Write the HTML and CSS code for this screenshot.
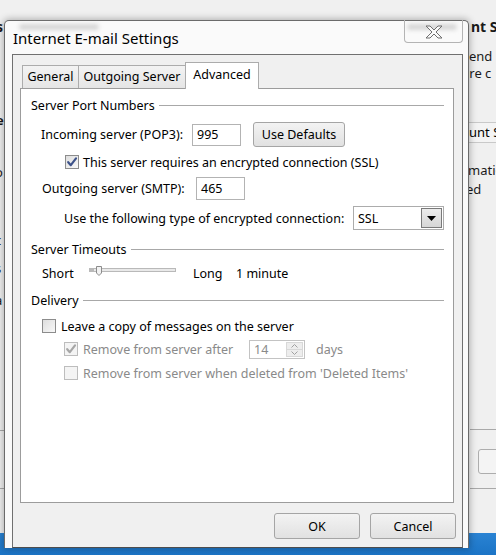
FILE: index.html
```html
<!DOCTYPE html>
<html>
<head>
<meta charset="utf-8">
<title>Internet E-mail Settings</title>
<link rel="stylesheet" href="styles.css">
</head>
<body>
<div class="desktop">
  <div class="bgwin">
    <span class="frag frag-title-r">nt Se</span>
    <span class="frag frag-end">end</span>
    <span class="frag frag-are">are c</span>
    <span class="frag-tab"><span>unt S</span></span>
    <span class="frag frag-mat">matio</span>
    <span class="frag frag-ed">ed</span>
    <span class="frag-line frag-line-1"></span>
    <span class="frag-btn"></span>
    <span class="frag-line frag-line-2"></span>
    <span class="frag frag-title-l">s</span>
    <span class="frag frag-l1">e</span>
    <span class="frag frag-l2">o</span>
    <span class="frag frag-l3">c</span>
    <span class="frag frag-l4">s</span>
    <span class="frag frag-l5">a</span>
    <span class="frag-line frag-line-l1"></span>
    <span class="frag-line frag-line-l2"></span>
  </div>
  <div class="taskbar"></div>

  <div class="dialog">
    <div class="titlebar">
      <span class="glass glass-l"></span>
      <span class="glass glass-r"></span>
      <span class="title">Internet E-mail Settings</span>
      <span class="close">
        <svg width="18" height="14" viewBox="0 0 18 14"><polygon points="1,1 5,1 9,5 13,1 17,1 11,7 17,13 13,13 9,9 5,13 1,13 7,7" fill="#fbfbfb" stroke="#6e6e6e" stroke-width="1" stroke-linejoin="round"/></svg>
      </span>
    </div>

    <div class="client">
      <div class="tabs">
        <div class="tab tab-general">General</div>
        <div class="tab tab-outgoing">Outgoing Server</div>
        <div class="tab tab-advanced active">Advanced</div>
      </div>

      <div class="panel">
        <div class="group-head gh-ports"><span>Server Port Numbers</span><i class="rule"></i></div>

        <div class="row r-in">
          <span class="lbl lbl-in">Incoming server (POP3):</span>
          <span class="field f-port">995</span>
          <span class="btn btn-def">Use Defaults</span>
        </div>

        <div class="row r-ssl">
          <span class="cb"><svg width="12" height="12" viewBox="0 0 12 12"><path d="M2.2 6.2 L4.8 9.2 L10 2.4" fill="none" stroke="#3d5289" stroke-width="2.2" stroke-linecap="round" stroke-linejoin="round"/></svg></span>
          <span class="cb-text">This server requires an encrypted connection (SSL)</span>
        </div>

        <div class="row r-out">
          <span class="lbl lbl-out">Outgoing server (SMTP):</span>
          <span class="field f-port f-out">465</span>
        </div>

        <div class="row r-enc">
          <span class="lbl lbl-enc">Use the following type of encrypted connection:</span>
          <span class="select">
            <span class="select-val">SSL</span>
            <span class="select-btn"><svg width="9" height="5" viewBox="0 0 9 5"><polygon points="0,0 9,0 4.5,5" fill="#000"/></svg></span>
          </span>
        </div>

        <div class="group-head gh-timeouts"><span>Server Timeouts</span><i class="rule"></i></div>

        <div class="row r-slider">
          <span class="lbl lbl-short">Short</span>
          <span class="slider">
            <svg width="88" height="20" viewBox="0 0 88 20">
              <rect x="0.5" y="5.5" width="86" height="3" fill="#e9e9e9" stroke="#b9b9b9"/>
              <line x1="1" y1="7" x2="5" y2="7" stroke="#8a8a8a"/>
              <polygon points="7.5,3.5 12.5,3.5 12.5,10 10,12.5 7.5,10" fill="#f2f2f2" stroke="#8c8c8c"/>
            </svg>
          </span>
          <span class="lbl lbl-long">Long</span>
          <span class="lbl">1 minute</span>
        </div>

        <div class="group-head gh-delivery"><span>Delivery</span><i class="rule"></i></div>

        <div class="row r-leave">
          <span class="cb"></span>
          <span class="cb-text cb-text-leave">Leave a copy of messages on the server</span>
        </div>

        <div class="row r-after disabled">
          <span class="cb cb-dis"><svg width="12" height="12" viewBox="0 0 12 12"><path d="M2.2 6.2 L4.8 9.2 L10 2.4" fill="none" stroke="#a6a6a6" stroke-width="2.2" stroke-linecap="round" stroke-linejoin="round"/></svg></span>
          <span class="cb-text lbl-after">Remove from server after</span>
          <span class="spin">
            <span class="spin-val">14</span>
            <span class="spin-btns">
              <span class="spin-b"><svg width="7" height="4" viewBox="0 0 7 4"><polyline points="0.5,3.5 3.5,0.5 6.5,3.5" fill="none" stroke="#a0a0a0"/></svg></span>
              <span class="spin-b"><svg width="7" height="4" viewBox="0 0 7 4"><polyline points="0.5,0.5 3.5,3.5 6.5,0.5" fill="none" stroke="#a0a0a0"/></svg></span>
            </span>
          </span>
          <span class="days">days</span>
        </div>

        <div class="row r-when disabled">
          <span class="cb cb-dis"></span>
          <span class="cb-text">Remove from server when deleted from 'Deleted Items'</span>
        </div>
      </div>

      <div class="buttons">
        <span class="btn btn-dlg">OK</span>
        <span class="btn btn-dlg">Cancel</span>
      </div>
    </div>
  </div>
</div>
</body>
</html>
```

FILE: styles.css
```css
* { box-sizing: border-box; }

body {
  margin: 0;
  background: #ececec;
  font-family: "Noto Sans", "DejaVu Sans", sans-serif;
  font-size: 12px;
  color: #000;
}

.desktop {
  position: relative;
  width: 496px;
  height: 555px;
  overflow: hidden;
  background: #ededed;
}

/* background window fragments */
.bgwin {
  position: absolute;
  left: 0;
  top: 0;
  width: 496px;
  height: 533px;
  background: #f0f0f0;
}
.frag {
  position: absolute;
  white-space: nowrap;
  font-size: 13px;
  line-height: 16px;
  color: #1a1a1a;
}
.frag-title-r { left: 471px; top: 19px; font-weight: bold; font-size: 14px; }
.frag-end { left: 469px; top: 48px; }
.frag-are { left: 462px; top: 65px; }
.frag-mat { left: 468px; top: 162px; }
.frag-ed { left: 466px; top: 181px; }
.frag-title-l { left: -4px; top: 19px; font-weight: bold; font-size: 14px; }
.frag-l1 { left: -4px; top: 112px; font-weight: bold; }
.frag-l2 { left: -5px; top: 164px; }
.frag-l3 { left: -5px; top: 232px; }
.frag-l4 { left: -5px; top: 260px; }
.frag-l5 { left: -5px; top: 292px; }
.frag-tab {
  position: absolute;
  left: 464px;
  top: 122px;
  width: 40px;
  height: 21px;
  border-top: 1px solid #c9c9c9;
  border-bottom: 1px solid #c9c9c9;
  background: #f4f4f4;
  font-size: 13px;
  line-height: 18px;
  padding-left: 5px;
  white-space: nowrap;
}
.frag-line {
  position: absolute;
  height: 1px;
  background: #a9a9a9;
}
.frag-line-1 { left: 470px; top: 429px; width: 26px; }
.frag-line-2 { left: 470px; top: 488px; width: 26px; }
.frag-line-l1 { left: 0; top: 430px; width: 4px; }
.frag-line-l2 { left: 0; top: 488px; width: 4px; }
.frag-btn {
  position: absolute;
  left: 478px;
  top: 449px;
  width: 30px;
  height: 25px;
  border: 1px solid #adadad;
  border-radius: 3px;
  background: #f4f4f4;
}
.taskbar {
  position: absolute;
  left: 0;
  top: 533px;
  width: 496px;
  height: 22px;
  background: linear-gradient(#2a83d3, #1b74c6);
}

/* dialog */
.dialog {
  position: absolute;
  left: 4px;
  top: 20px;
  width: 465px;
  height: 528px;
  border: 1px solid #6b6b6b;
  border-bottom: none;
  border-radius: 5px 5px 0 0;
  background: #fafafa;
  box-shadow: 0 0 7px 1px rgba(0, 0, 0, 0.28);
  display: flex;
  flex-direction: column;
}

.titlebar {
  position: relative;
  height: 33px;
  display: flex;
  align-items: center;
  padding-left: 8px;
}
.glass {
  position: absolute;
  top: 3px;
  height: 6px;
  border-radius: 3px;
  background: #b8b8b8;
  filter: blur(2px);
  opacity: 0.55;
}
.glass-l { left: 14px; width: 80px; }
.glass-r { left: 402px; width: 50px; }
.title {
  position: relative;
  font-size: 15px;
  line-height: 20px;
  color: #000;
}
.close {
  position: relative;
  margin-left: auto;
  margin-right: 5px;
  align-self: flex-start;
  margin-top: -1px;
  width: 59px;
  height: 23px;
  border: 1px solid #b4b4b4;
  border-top: none;
  border-radius: 0 0 4px 4px;
  display: flex;
  align-items: center;
  justify-content: center;
  padding-top: 1px;
}

.client {
  margin-left: 7px;
  width: 451px;
  height: 494px;
  border: 1px solid #707070;
  border-bottom-color: #4d4d4d;
  background: #f0f0f0;
}

.tabs {
  display: flex;
  align-items: flex-end;
  height: 26px;
  margin: 7px 0 0 9px;
}
.tab {
  height: 23px;
  border: 1px solid #acacac;
  border-bottom: none;
  background: linear-gradient(#f3f3f3, #e5e5e5);
  text-align: center;
  line-height: 22px;
  font-size: 12.5px;
  white-space: nowrap;
}
.tab + .tab { margin-left: -1px; }
.tab-general { width: 57px; }
.tab-outgoing { width: 108px; }
.tab-advanced {
  position: relative;
  z-index: 1;
  width: 74px;
  height: 27px;
  margin-bottom: -1px;
  background: #fff;
  line-height: 24px;
}

.panel {
  margin-left: 7px;
  width: 434px;
  height: 415px;
  border: 1px solid #9c9c9c;
  background: #fff;
  padding: 0 9px 0 10px;
  font-size: 12.5px;
}

.group-head {
  display: flex;
  align-items: center;
  height: 20px;
  white-space: nowrap;
}
.group-head .rule {
  flex: 1;
  height: 1px;
  margin-left: 4px;
  background: #a8a8a8;
}
.gh-ports { margin-top: 6px; }
.gh-timeouts { margin-top: 9px; }
.gh-delivery { margin-top: 7px; }

.row {
  display: flex;
  align-items: center;
  white-space: nowrap;
}
.lbl { display: block; }

.r-in { margin-top: 7px; height: 25px; padding-left: 10px; }
.lbl-in { width: 151px; }
.field {
  display: flex;
  align-items: center;
  height: 22px;
  border: 1px solid #b3b3b3;
  background: #fff;
  padding-left: 4px;
}
.f-port { width: 49px; }
.f-out { height: 23px; }
.btn {
  display: flex;
  align-items: center;
  justify-content: center;
  border: 1px solid #a5a5a5;
  border-radius: 3px;
  background: linear-gradient(#f3f3f3, #e1e1e1);
  white-space: nowrap;
}
.btn-def { margin-left: 12px; width: 92px; height: 25px; }

.r-ssl { margin-top: 6px; height: 18px; padding-left: 34px; }
.cb {
  display: flex;
  align-items: center;
  justify-content: center;
  width: 14px;
  height: 14px;
  border: 1px solid #8c8c8c;
  background: linear-gradient(135deg, #dedede, #f8f8f8);
  flex: none;
}
.cb-dis {
  border-color: #bdbdbd;
  background: #f4f4f4;
}
.cb-text { margin-left: 4px; }
.cb-text-leave { margin-left: 5px; }

.r-out { margin-top: 6px; height: 23px; padding-left: 11px; }
.lbl-out { width: 154px; }

.r-enc { margin-top: 6px; height: 24px; padding-left: 33px; }
.lbl-enc { width: 289px; }
.select {
  display: flex;
  align-items: center;
  width: 91px;
  height: 24px;
  border: 1px solid #acacac;
  background: #fff;
  padding: 1px;
}
.select-val { flex: 1; padding-left: 3px; }
.select-btn {
  display: flex;
  align-items: center;
  justify-content: center;
  width: 21px;
  height: 20px;
  border: 1px solid #7a7a7a;
  background: linear-gradient(#ececec, #d6d6d6);
}

.r-slider { margin-top: 4px; height: 20px; padding-left: 11px; }
.lbl-short { width: 47px; }
.slider { display: block; width: 88px; height: 20px; }
.lbl-long { margin-left: 16px; width: 43px; }

.r-leave { margin-top: 7px; height: 18px; padding-left: 11px; }

.disabled { color: #8a8a8a; }
.r-after { margin-top: 4px; height: 20px; padding-left: 33px; }
.lbl-after { width: 166px; margin-left: 5px; }
.spin {
  display: flex;
  width: 56px;
  height: 19px;
  border: 1px solid #c3c3c3;
  background: #fff;
}
.spin-val { flex: 1; padding-left: 4px; line-height: 17px; }
.spin-btns {
  display: flex;
  flex-direction: column;
  width: 19px;
  padding: 1px;
}
.spin-b {
  flex: 1;
  display: flex;
  align-items: center;
  justify-content: center;
  background: #ededed;
  border: 1px solid #d8d8d8;
}
.spin-b + .spin-b { border-top: none; }
.days { margin-left: 11px; }

.r-when { margin-top: 5px; height: 18px; padding-left: 33px; }
.r-when .cb-text { margin-left: 5px; }

.buttons {
  display: flex;
  justify-content: flex-end;
  gap: 10px;
  margin-top: 10px;
  padding-right: 6px;
  font-size: 12.5px;
}
.btn-dlg { width: 86px; height: 26px; }
```
